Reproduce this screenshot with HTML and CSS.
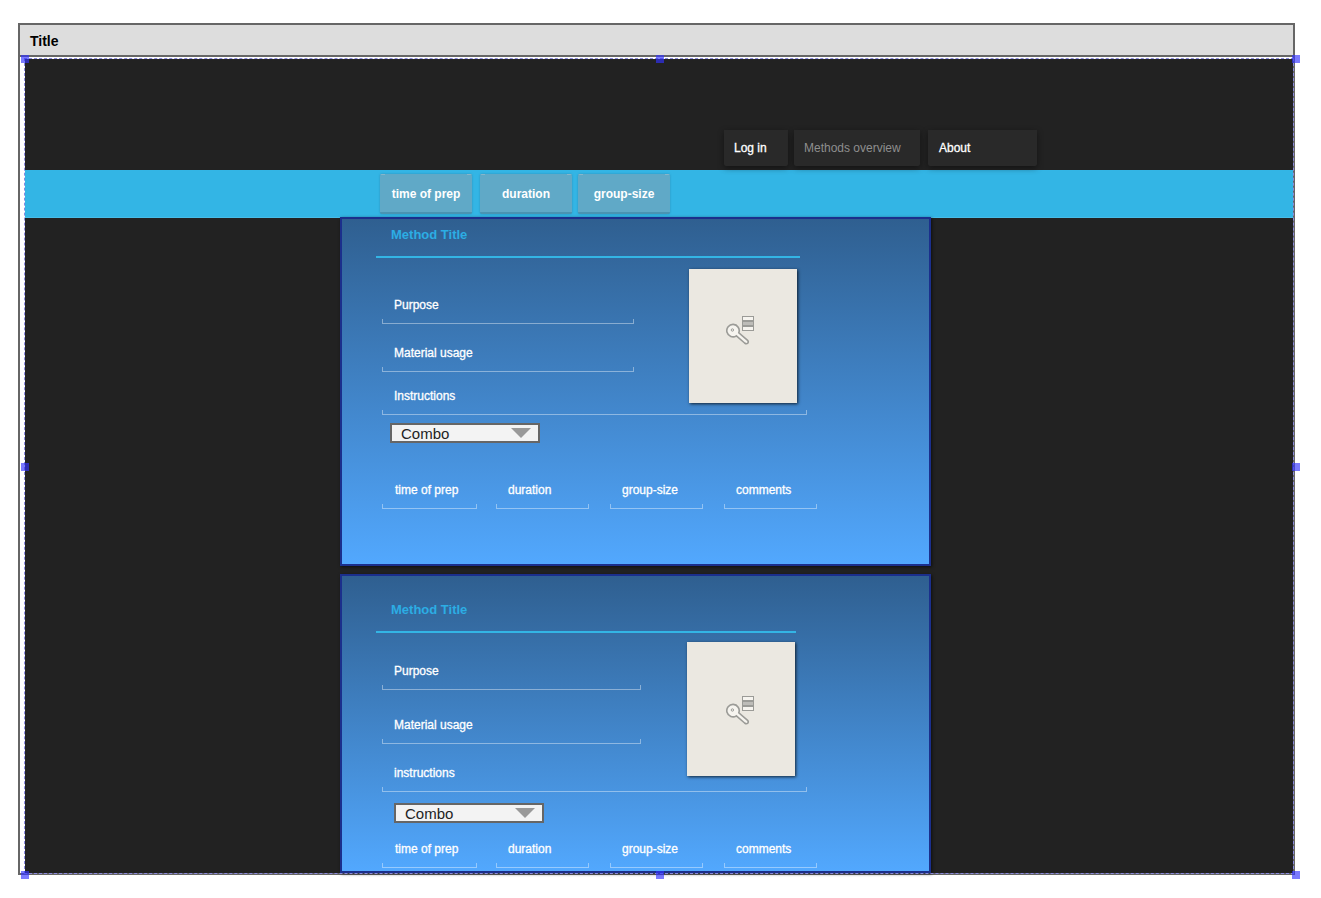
FILE: index.html
```html
<!DOCTYPE html>
<html>
<head>
  <title>Method overview</title>
  <link rel="stylesheet" href="styles.css">
</head>
<body>
  <div class="window">
    <div class="title-bar">Title</div>
    <div class="stage">
      <nav class="top-nav">
        <a class="nav-item nav-login">Log in</a>
        <a class="nav-item nav-methods">Methods overview</a>
        <a class="nav-item nav-about">About</a>
      </nav>
      <div class="filter-band">
        <button class="filter-btn">time of prep</button>
        <button class="filter-btn">duration</button>
        <button class="filter-btn">group-size</button>
      </div>

      <section class="method method-first">
        <h3 class="method-title">Method Title</h3>
        <div class="method-grid">
          <div class="field field-purpose"><span>Purpose</span><i class="bracket"></i></div>
          <div class="field field-material"><span>Material usage</span><i class="bracket"></i></div>
          <div class="field field-instructions"><span>Instructions</span><i class="bracket"></i></div>
          <div class="picture">
            <svg class="key-icon" width="30" height="30" viewBox="0 0 30 30">
              <rect x="16.5" y="1.5" width="11" height="4" fill="#f6f4ef" stroke="#9b9b97"/>
              <rect x="16.5" y="6.5" width="11" height="4" fill="#bdbcb8" stroke="#9b9b97"/>
              <rect x="16.5" y="11.5" width="11" height="4" fill="#f6f4ef" stroke="#9b9b97"/>
              <path d="M10.4 20.8 L18.6 28 Q20.4 29.4 21.8 28.2 Q22.8 26.6 21.6 25.4 L12.8 17.8 A6.2 6.2 0 1 0 10.4 20.8 Z" fill="#f6f4ef" stroke="#9b9b97" stroke-width="1.6"/>
              <circle cx="6.4" cy="15" r="1.2" fill="none" stroke="#9b9b97"/>
            </svg>
          </div>
        </div>
        <div class="combo"><span>Combo</span><i class="combo-arrow"></i></div>
        <div class="method-cols">
          <div class="col col-1"><span>time of prep</span><i class="bracket"></i></div>
          <div class="col col-2"><span>duration</span><i class="bracket"></i></div>
          <div class="col col-3"><span>group-size</span><i class="bracket"></i></div>
          <div class="col col-4"><span>comments</span><i class="bracket"></i></div>
        </div>
      </section>

      <section class="method method-second">
        <h3 class="method-title">Method Title</h3>
        <div class="method-grid">
          <div class="field field-purpose"><span>Purpose</span><i class="bracket"></i></div>
          <div class="field field-material"><span>Material usage</span><i class="bracket"></i></div>
          <div class="field field-instructions"><span>instructions</span><i class="bracket"></i></div>
          <div class="picture">
            <svg class="key-icon" width="30" height="30" viewBox="0 0 30 30">
              <rect x="16.5" y="1.5" width="11" height="4" fill="#f6f4ef" stroke="#9b9b97"/>
              <rect x="16.5" y="6.5" width="11" height="4" fill="#bdbcb8" stroke="#9b9b97"/>
              <rect x="16.5" y="11.5" width="11" height="4" fill="#f6f4ef" stroke="#9b9b97"/>
              <path d="M10.4 20.8 L18.6 28 Q20.4 29.4 21.8 28.2 Q22.8 26.6 21.6 25.4 L12.8 17.8 A6.2 6.2 0 1 0 10.4 20.8 Z" fill="#f6f4ef" stroke="#9b9b97" stroke-width="1.6"/>
              <circle cx="6.4" cy="15" r="1.2" fill="none" stroke="#9b9b97"/>
            </svg>
          </div>
        </div>
        <div class="combo"><span>Combo</span><i class="combo-arrow"></i></div>
        <div class="method-cols">
          <div class="col col-1"><span>time of prep</span><i class="bracket"></i></div>
          <div class="col col-2"><span>duration</span><i class="bracket"></i></div>
          <div class="col col-3"><span>group-size</span><i class="bracket"></i></div>
          <div class="col col-4"><span>comments</span><i class="bracket"></i></div>
        </div>
      </section>
    </div>

    <!-- selection handles -->
    <i class="handle h-tl"></i>
    <i class="handle h-tm"></i>
    <i class="handle h-tr"></i>
    <i class="handle h-ml"></i>
    <i class="handle h-mr"></i>
    <i class="handle h-bl"></i>
    <i class="handle h-bm"></i>
    <i class="handle h-br"></i>
  </div>
</body>
</html>
```

FILE: styles.css
```css
* {
  box-sizing: border-box;
}

html, body {
  margin: 0;
  background-color: #ffffff;
}

body {
  padding: 23px 0 0 18px;
  font-family: "Liberation Sans", Arial, sans-serif;
  font-size: 12px;
  height: 898px;
  overflow: hidden;
}

.window {
  position: relative;
  width: 1277px;
  height: 852px;
  border: 2px solid #666666;
  background-color: #ffffff;
}

.title-bar {
  height: 32px;
  padding: 0 10px;
  background-color: #dddddd;
  border-bottom: 2px solid #666666;
  font-size: 14px;
  font-weight: bold;
  line-height: 32px;
  color: #000000;
}

.stage {
  width: 1268px;
  height: 814px;
  margin: 2px 0 0 5px;
  padding-top: 71px;
  background-color: #222222;
  outline: 1px dashed #8a8ae0;
}

/* top menu */
.top-nav {
  display: flex;
  height: 37px;
  padding-left: 699px;
}

.nav-item {
  height: 36px;
  padding-left: 10px;
  background-color: #292929;
  border-radius: 0 0 2px 2px;
  box-shadow: 0 2px 6px rgba(0, 0, 0, 0.45);
  line-height: 36px;
  color: #ffffff;
  -webkit-text-stroke: 0.3px #ffffff;
}

.nav-login {
  width: 64px;
  margin-right: 6px;
}

.nav-methods {
  width: 126px;
  margin-right: 8px;
  color: #8e8e8e;
  -webkit-text-stroke: 0;
}

.nav-about {
  width: 109px;
  padding-left: 11px;
}

/* cyan band */
.filter-band {
  display: flex;
  gap: 8px;
  height: 48px;
  margin-top: 3px;
  padding: 4px 0 0 355px;
  background-color: #33b5e5;
  border-bottom: 1px solid #48bde8;
}

.filter-btn {
  width: 92px;
  height: 40px;
  padding: 2px 0 0;
  border: 0;
  border-bottom: 2px solid #4a93b2;
  border-radius: 2px;
  background:
    linear-gradient(#88b6ca, #88b6ca) left top / 5px 1px no-repeat,
    linear-gradient(#88b6ca, #88b6ca) right top / 5px 1px no-repeat,
    #60a9c7;
  box-shadow: 0 0 2px rgba(40, 120, 160, 0.7);
  font-family: inherit;
  font-size: 12px;
  font-weight: bold;
  color: #ffffff;
}

.filter-btn:last-child {
  margin-left: -2px;
}

/* method cards */
.method {
  width: 591px;
  margin-left: 315px;
  border: 2px solid #1b2f8c;
  background: linear-gradient(#2f5f90, #52a8fe);
  box-shadow: 1px 1px 3px rgba(0, 0, 0, 0.6);
}

.method-first {
  height: 349px;
  margin-top: -1px;
  padding-top: 8px;
}

.method-second {
  height: 299px;
  margin-top: 8px;
  padding-top: 26px;
}

.method-title {
  height: 31px;
  margin: 0 0 0 34px;
  padding-left: 15px;
  width: 424px;
  border-bottom: 2px solid #33b5e5;
  font-size: 13px;
  line-height: 15px;
  color: #2cade4;
}

.method-second .method-title {
  width: 420px;
}

.method-grid {
  display: grid;
  grid-template-columns: 307px 108px;
  grid-template-rows: 55px 48px 43px;
  margin: 11px 0 0 40px;
}

.method-second .method-grid {
  grid-template-columns: 305px 108px;
  grid-template-rows: 48px 54px 48px;
  margin-top: 9px;
}

.field {
  align-self: end;
}

.field span, .col span {
  display: block;
  height: 14px;
  margin-bottom: 7px;
  padding-left: 12px;
  line-height: 14px;
  color: #ffffff;
  -webkit-text-stroke: 0.3px #ffffff;
}

.bracket {
  display: block;
  height: 5px;
  border: 1px solid rgba(255, 255, 255, 0.4);
  border-top: 0;
}

.field-purpose {
  grid-column: 1;
  grid-row: 1;
  width: 252px;
}

.field-material {
  grid-column: 1;
  grid-row: 2;
  width: 252px;
}

.method-second .field-purpose, .method-second .field-material {
  width: 259px;
}

.field-instructions {
  grid-column: 1 / -1;
  grid-row: 3;
  width: 425px;
}

.picture {
  grid-column: 2;
  grid-row: 1 / span 3;
  align-self: start;
  height: 134px;
  padding: 46px 0 0 37px;
  background-color: #ebe8e1;
  box-shadow: 1px 1px 3px rgba(0, 0, 0, 0.75);
}

.method-second .picture {
  padding: 53px 0 0 39px;
}

.key-icon {
  display: block;
}

.combo {
  display: flex;
  align-items: center;
  justify-content: space-between;
  width: 150px;
  height: 20px;
  margin: 8px 0 0 48px;
  padding: 0 7px 0 9px;
  border: 2px solid #666666;
  background-color: #f3f3f3;
  font-size: 15px;
  color: #222222;
}

.method-second .combo {
  margin: 11px 0 0 52px;
}

.combo-arrow {
  width: 0;
  height: 0;
  border-left: 10px solid transparent;
  border-right: 10px solid transparent;
  border-top: 10px solid #999999;
}

.method-cols {
  display: flex;
  margin: 40px 0 0 40px;
}

.method-second .method-cols {
  margin-top: 19px;
}

.col span {
  padding-left: 13px;
}

.col-1 {
  width: 95px;
  margin-right: 19px;
}

.col-2 {
  width: 93px;
  margin-right: 21px;
}

.col-2 span, .col-3 span, .col-4 span {
  padding-left: 12px;
}

.col-3 {
  width: 93px;
  margin-right: 21px;
}

.col-4 {
  width: 93px;
}

/* selection handles sit over the frame */
.handle {
  position: absolute;
  width: 8px;
  height: 8px;
  background-color: rgba(50, 50, 255, 0.65);
}

.h-tl { left: 1px; top: 30px; }
.h-tm { left: 636px; top: 30px; }
.h-tr { left: 1272px; top: 30px; }
.h-ml { left: 1px; top: 438px; }
.h-mr { left: 1272px; top: 438px; }
.h-bl { left: 1px; top: 846px; }
.h-bm { left: 636px; top: 846px; }
.h-br { left: 1272px; top: 846px; }
```
